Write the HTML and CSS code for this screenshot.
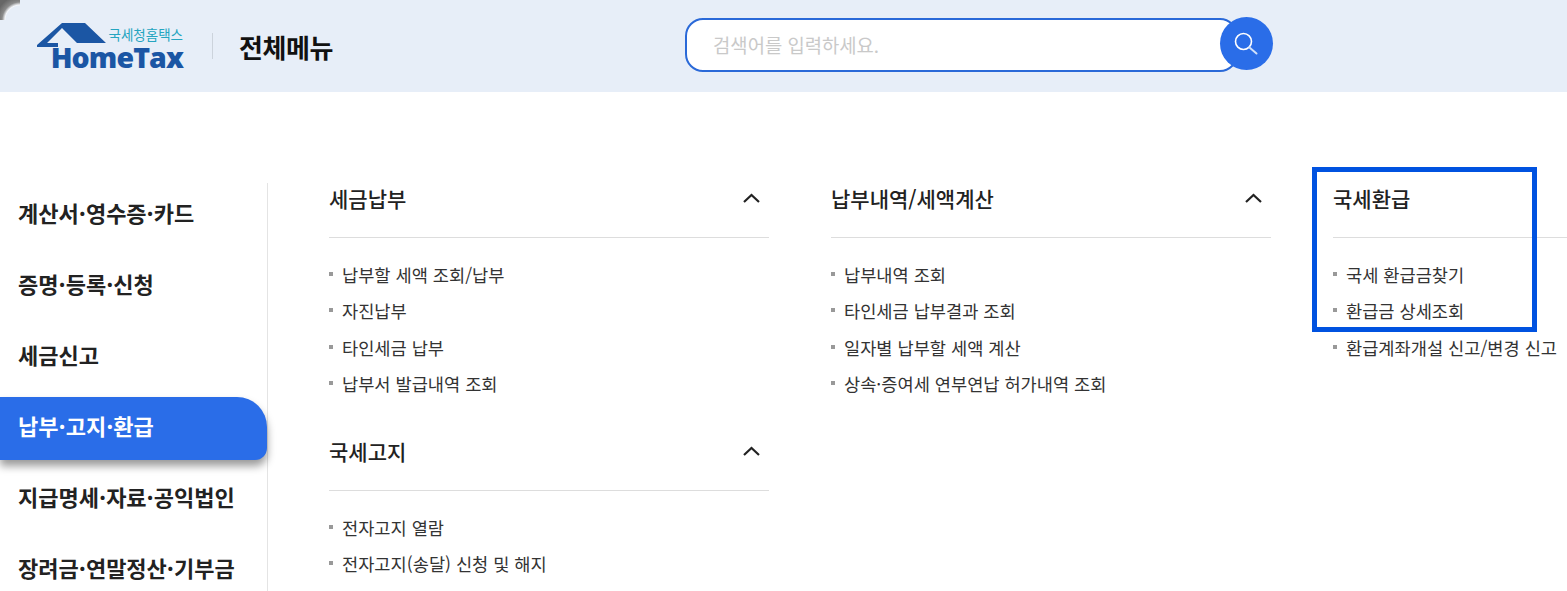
FILE: index.html
```html
<!DOCTYPE html>
<html lang="ko">
<head>
<meta charset="UTF-8">
<title>전체메뉴</title>
<link rel="stylesheet" href="styles.css">
</head>
<body>

<header class="top">
  <a class="logo">
    <svg class="logo-roof" width="76" height="30" viewBox="0 0 76 30">
      <path d="M1 23 L26 1 L49 1 L70 21 L41 21 L26 6 L11 21 L22 21 L22 25 L1 25 Z" fill="#1b56a4"/>
    </svg>
    <span class="logo-sub">국세청홈택스</span>
    <span class="logo-name">HomeTax</span>
  </a>
  <span class="top-line"></span>
  <h1 class="top-title">전체메뉴</h1>
  <div class="search">
    <div class="search-box">검색어를 입력하세요.</div>
    <button class="search-btn">
      <svg width="26" height="26" viewBox="0 0 26 26" fill="none" stroke="#fff">
        <circle cx="9.500" cy="10.500" r="8" stroke-width="1.600"/>
        <path d="M15.500 16.500 L22.500 22.500" stroke="#cfe0fa" stroke-width="2" stroke-linecap="round"/>
      </svg>
    </button>
  </div>
</header>

<div class="wrap">
  <nav class="side">
    <a class="side-item">계산서·영수증·카드</a>
    <a class="side-item">증명·등록·신청</a>
    <a class="side-item">세금신고</a>
    <a class="side-item active">납부·고지·환급</a>
    <a class="side-item">지급명세·자료·공익법인</a>
    <a class="side-item">장려금·연말정산·기부금</a>
  </nav>

  <main class="cols">
    <section class="col">
      <div class="group">
        <div class="group-head"><h2>세금납부</h2><svg class="arrow" width="17" height="10" viewBox="0 0 17 10"><path d="M1 9 L8.500 2 L16 9" fill="none" stroke="#222" stroke-width="2.200"/></svg></div>
        <ul class="links">
          <li>납부할 세액 조회/납부</li>
          <li>자진납부</li>
          <li>타인세금 납부</li>
          <li>납부서 발급내역 조회</li>
        </ul>
      </div>
      <div class="group">
        <div class="group-head"><h2>국세고지</h2><svg class="arrow" width="17" height="10" viewBox="0 0 17 10"><path d="M1 9 L8.500 2 L16 9" fill="none" stroke="#222" stroke-width="2.200"/></svg></div>
        <ul class="links">
          <li>전자고지 열람</li>
          <li>전자고지(송달) 신청 및 해지</li>
        </ul>
      </div>
    </section>

    <section class="col">
      <div class="group">
        <div class="group-head"><h2>납부내역/세액계산</h2><svg class="arrow" width="17" height="10" viewBox="0 0 17 10"><path d="M1 9 L8.500 2 L16 9" fill="none" stroke="#222" stroke-width="2.200"/></svg></div>
        <ul class="links">
          <li>납부내역 조회</li>
          <li>타인세금 납부결과 조회</li>
          <li>일자별 납부할 세액 계산</li>
          <li>상속·증여세 연부연납 허가내역 조회</li>
        </ul>
      </div>
    </section>

    <section class="col">
      <div class="group">
        <div class="group-head"><h2>국세환급</h2></div>
        <ul class="links">
          <li>국세 환급금찾기</li>
          <li>환급금 상세조회</li>
          <li>환급계좌개설 신고/변경 신고</li>
        </ul>
      </div>
    </section>
  </main>
</div>

<div class="mark"></div>

</body>
</html>
```

FILE: styles.css
```css
* { box-sizing: border-box; }
html, body { height: 100%; }
body {
  margin: 0;
  background: #fff;
  color: #222;
  font-family: "Noto Sans CJK KR", "Noto Sans", sans-serif;
  overflow: hidden;
  position: relative;
}

/* top bar */
.top {
  display: flex;
  align-items: center;
  height: 92px;
  padding-left: 36px;
  background: #e7eef8;
  position: relative;
  overflow: hidden;
}
/* window corner */
.top::before {
  content: "";
  position: absolute;
  top: 0;
  left: 0;
  width: 20px;
  height: 20px;
  background: radial-gradient(circle at 100% 100%, transparent 14px, #f4f6fa 15px, #8a8a8a 18px, #666 24px);
}
.logo {
  position: relative;
  display: block;
  width: 148px;
  height: 46px;
  margin-top: -1px;
}
.logo-roof {
  position: absolute;
  top: -1px;
  left: 0;
}
.logo-sub {
  position: absolute;
  top: 4px;
  right: 1px;
  font-size: 13.500px;
  line-height: 14px;
  color: #25a5c0;
}
.logo-name {
  position: absolute;
  bottom: 1px;
  right: 1px;
  font-family: "Open Sans", sans-serif;
  font-weight: 800;
  font-size: 28.500px;
  line-height: 22px;
  letter-spacing: -0.9px;
  color: #1b56a4;
}
.top-line {
  width: 1px;
  height: 26px;
  margin: 0 26px 0 28px;
  background: #ccd3dc;
}
.top-title {
  margin: 0;
  font-size: 26px;
  font-weight: 700;
  letter-spacing: -0.4px;
  color: #111;
}

/* search */
.search {
  display: flex;
  align-items: center;
  margin-left: 352px;
  margin-top: -2px;
}
.search-box {
  width: 553px;
  height: 54px;
  padding-left: 26px;
  border: 2px solid #2a69d8;
  border-radius: 18px;
  background: #fff;
  font-size: 18.800px;
  line-height: 50px;
  color: #c9c9c9;
}
.search-btn {
  display: flex;
  align-items: center;
  justify-content: center;
  width: 53px;
  height: 53px;
  margin-left: -18px;
  margin-top: -3px;
  padding: 0;
  border: 0;
  border-radius: 50%;
  background: #2a6de8;
  position: relative;
}

/* body */
.wrap {
  display: flex;
  padding-top: 91px;
}
.side {
  flex: none;
  width: 268px;
  height: 408px;
  padding-top: 1px;
  border-right: 1px solid #e4e4e4;
}
.side-item {
  display: flex;
  align-items: center;
  height: 63px;
  margin-bottom: 8px;
  padding-left: 18px;
  padding-bottom: 7px;
  font-size: 22px;
  font-weight: 700;
  color: #222;
}
.side-item.active {
  background: #2a6de8;
  color: #fff;
  border-radius: 0 30px 12px 0;
  box-shadow: 0 6px 8px rgba(0, 0, 0, 0.4);
}

.cols {
  display: flex;
  gap: 62px;
  padding-left: 61px;
}
.col { flex: none; width: 440px; }
.col:last-child { width: 300px; }

.group { margin-bottom: 33px; }
.group-head {
  display: flex;
  align-items: center;
  justify-content: space-between;
  height: 55px;
  padding-right: 9px;
  padding-bottom: 24px;
  border-bottom: 1px solid #ddd;
}
.group-head h2 {
  margin: 0;
  font-size: 21px;
  font-weight: 500;
  color: #222;
}
.links {
  margin: 19px 0 0;
  padding: 0;
  list-style: none;
}
.links li {
  position: relative;
  height: 36.400px;
  padding-left: 13px;
  font-size: 17.600px;
  line-height: 36px;
  color: #333;
}
.links li::before {
  content: "";
  position: absolute;
  left: 0;
  top: 15px;
  width: 4px;
  height: 4px;
  background: #999;
}

/* highlight drawn over the menu */
.mark {
  position: absolute;
  left: 1312px;
  top: 167px;
  width: 225px;
  height: 165px;
  border: 5px solid #0052e0;
}
```
